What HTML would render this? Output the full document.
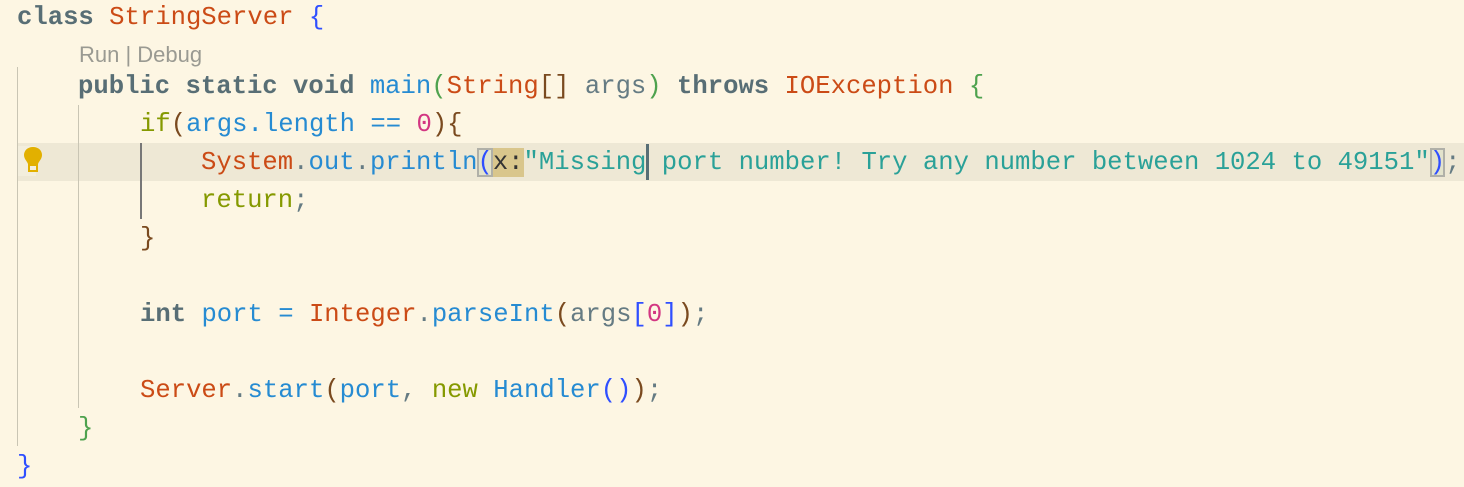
<!DOCTYPE html>
<html><head><style>
body{margin:0;width:1464px;height:484px;background:#fdf6e3;overflow:hidden;position:relative;font-family:"Liberation Mono",monospace;font-size:25.6px;color:#657b83}
.l{position:absolute;left:0;height:38px;line-height:40px;white-space:pre}
.k{color:#586e75;font-weight:bold}.c{color:#cb4b16}.b{color:#268bd2}.s{color:#2aa198}.n{color:#d33682}.g{color:#859900}.br{color:#7a4a1f}.bl{color:#2f4fff}.gr{color:#4ea24e}
.guide{position:absolute;width:1px;background:#c9c5b4}
</style></head><body>
<div style="position:absolute;left:17px;top:143px;right:0;height:38px;background:#eee8d5"></div>
<div class="guide" style="left:17px;top:67px;height:379px"></div>
<div class="guide" style="left:78px;top:105px;height:303px"></div>
<div class="guide" style="left:140px;top:143px;height:76px;background:#777;width:2px"></div>
<div style="position:absolute;left:18px;top:146px;width:18px;height:30px;background:#f3eedd"></div>
<svg style="position:absolute;left:22px;top:146px" width="22" height="28" viewBox="0 0 22 28"><path d="M11 1C5 1 2 5 2 9c0 4 3 6 4 9h10c1-3 4-5 4-9 0-4-3-8-9-8z" fill="#e2b000"/><rect x="7" y="19" width="8" height="6" fill="none" stroke="#e2b000" stroke-width="2"/></svg>
<div class="l" style="top:-2px;left:17px"><span class="k">class</span> <span class="c">StringServer</span> <span class="bl">{</span></div>
<div style="position:absolute;left:79px;top:40px;font-family:'Liberation Sans',sans-serif;font-size:22px;color:#9a9a92;line-height:30px">Run | Debug</div>
<div class="l" style="top:67px;left:78px"><span class="k">public</span> <span class="k">static</span> <span class="k">void</span> <span class="b">main</span><span class="gr">(</span><span class="c">String</span><span class="br">[]</span> args<span class="gr">)</span> <span class="k">throws</span> <span class="c">IOException</span> <span class="gr">{</span></div>
<div class="l" style="top:105px;left:140px"><span class="g">if</span><span class="br">(</span><span class="b">args.length</span> <span class="b">==</span> <span class="n">0</span><span class="br">){</span></div>
<div class="l" style="top:143px;left:201px"><span class="c">System</span>.<span class="b">out</span>.<span class="b">println</span><span style="color:#2f4fff;outline:2px solid #b0b0a8;outline-offset:-2px;background:#e3e3cc">(</span><span style="background:#d9c68c;color:#333">x:</span><span class="s">"Missing</span><span style="display:inline-block;width:3px;height:36px;background:#586e75;vertical-align:middle;margin:0 -3px 0 0"></span><span class="s"> port number! Try any number between 1024 to 49151"</span><span style="color:#2f4fff;outline:2px solid #b0b0a8;outline-offset:-2px;background:#e3e3cc">)</span>;</div>
<div class="l" style="top:181px;left:201px"><span class="g">return</span>;</div>
<div class="l" style="top:219px;left:140px"><span class="br">}</span></div>
<div class="l" style="top:295px;left:140px"><span class="k">int</span> <span class="b">port</span> <span class="b">=</span> <span class="c">Integer</span>.<span class="b">parseInt</span><span class="br">(</span>args<span class="bl">[</span><span class="n">0</span><span class="bl">]</span><span class="br">)</span>;</div>
<div class="l" style="top:371px;left:140px"><span class="c">Server</span>.<span class="b">start</span><span class="br">(</span><span class="b">port</span>, <span class="g">new</span> <span class="b">Handler</span><span class="bl">()</span><span class="br">)</span>;</div>
<div class="l" style="top:409px;left:78px"><span class="gr">}</span></div>
<div class="l" style="top:447px;left:17px"><span class="bl">}</span></div>
</body></html>
